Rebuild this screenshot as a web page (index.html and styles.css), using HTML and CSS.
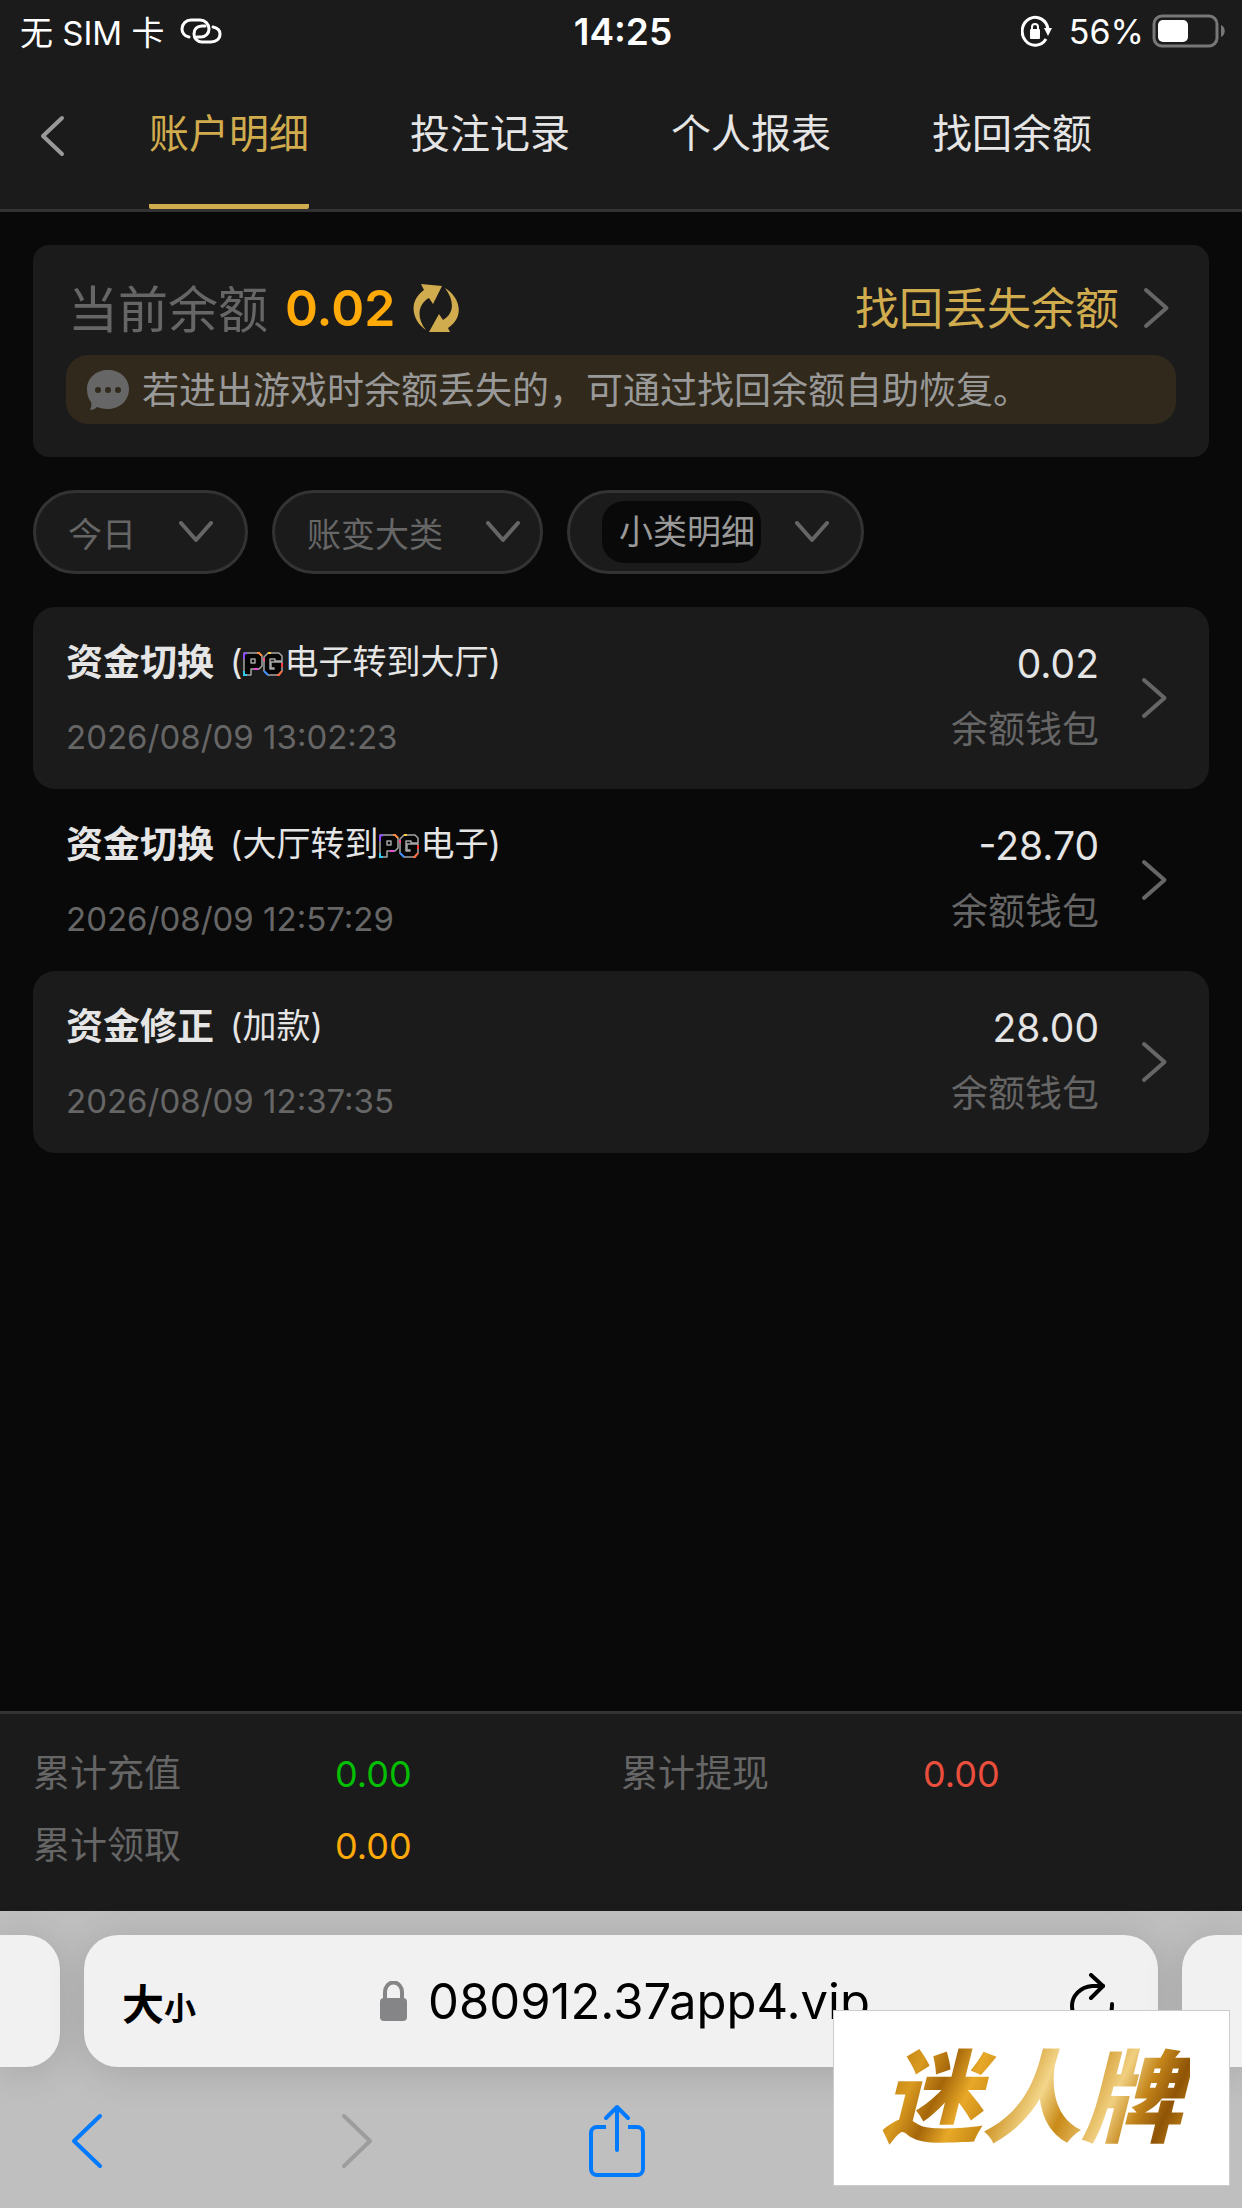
FILE: index.html
```html
<!DOCTYPE html>
<html lang="zh-CN">
<head>
  <meta charset="UTF-8">
  <meta name="viewport" content="width=device-width, initial-scale=1.0">
  <title>账户明细</title>
  <link rel="stylesheet" href="styles.css">
</head>
<body>

<svg class="sprite" aria-hidden="true">
  <symbol id="i-right" viewBox="0 0 27 42">
    <path d="M3 3l20.500 18L3 39" fill="none" stroke="currentColor" stroke-width="4" stroke-linecap="round" stroke-linejoin="round"/>
  </symbol>
  <symbol id="i-left" viewBox="0 0 27 42">
    <path d="M23 3L4 21l19 18" fill="none" stroke="currentColor" stroke-width="4" stroke-linecap="round" stroke-linejoin="round"/>
  </symbol>
  <symbol id="i-down" viewBox="0 0 34 22">
    <path d="M2 2l15 17L32 2" fill="none" stroke="currentColor" stroke-width="4" stroke-linecap="round" stroke-linejoin="round"/>
  </symbol>
  <symbol id="i-pg" viewBox="0 0 42 24">
    <g fill="#050505" stroke="#a5a5a5" stroke-width="1.500" stroke-linejoin="round">
      <path d="M2 1h15l3 3v10l-3 3H9v6H2z"/>
      <path d="M9 7h4v4H9z"/>
      <path d="M26 1h11l3 3v5h-7V7h-5v10h4v-1h-3v-6h11v9l-4 4H26l-4-4V5z"/>
    </g>
    <g fill="none" stroke-width="2">
      <path d="M2 7V2l3-1" stroke="#8a4bff"/>
      <path d="M15 1h2l3 3" stroke="#ff8a3c"/>
      <path d="M2 19v4h3" stroke="#33c8e8"/>
      <path d="M12 17h4" stroke="#f04be0"/>
      <path d="M22 9V6" stroke="#ff4f8a"/>
      <path d="M26 1h3" stroke="#ffc83c"/>
      <path d="M22 19l4 4" stroke="#3c8aff"/>
      <path d="M40 11v4" stroke="#ff3c3c"/>
      <path d="M35 23h2l3-4" stroke="#ff6a3c"/>
    </g>
  </symbol>
</svg>

<div class="page">

  <!-- 状态栏 -->
  <div class="status">
    <div class="status-left">
      <span>无 SIM 卡</span>
      <svg width="42" height="26" viewBox="0 0 42 26" fill="none" stroke="#fff" stroke-width="3" stroke-linecap="round">
        <path d="M9 19C4 18 2 14 2 11c0-5 4-9 9-9h9c5 0 9 4 9 9 0 4-3 8-8 8h-4"/>
        <path d="M33 9c5 1 7 4 7 7 0 5-4 8-9 8h-9c-5 0-8-4-8-8 0-5 3-8 8-8h3"/>
      </svg>
    </div>
    <div class="clock">14:25</div>
    <div class="status-right">
      <svg width="32" height="34" viewBox="0 0 32 34" fill="none" stroke="#fff" stroke-width="3">
        <path d="M25 25A13 14 0 1 1 27 15" />
        <path d="M23 14h8l-4 8z" fill="#fff" stroke="none"/>
        <rect x="9" y="15" width="10" height="10" rx="1" fill="#fff" stroke="none"/>
        <path d="M11 16v-3a3 3 0 0 1 6 0v3" stroke-width="2"/>
      </svg>
      <span class="percent">56%</span>
      <svg width="74" height="34" viewBox="0 0 74 34">
        <rect x="2" y="2" width="63" height="30" rx="8" fill="none" stroke="#777" stroke-width="3"/>
        <rect x="6" y="6" width="30" height="22" rx="5" fill="#fff"/>
        <path d="M69 11c5 2 5 10 0 12z" fill="#777"/>
      </svg>
    </div>
  </div>

  <!-- 顶部导航 -->
  <header class="nav">
    <button class="back" aria-label="返回"><svg width="27" height="42"><use href="#i-left"/></svg></button>
    <nav class="tabs">
      <a class="tab active" href="#detail">账户明细</a>
      <a class="tab" href="#bets">投注记录</a>
      <a class="tab" href="#report">个人报表</a>
      <a class="tab" href="#recover">找回余额</a>
    </nav>
  </header>

  <main class="content">
    <!-- 余额 -->
    <section class="balance">
      <div class="balance-row">
        <span class="balance-label">当前余额</span>
        <span class="balance-value">0.02</span>
        <button class="refresh" aria-label="刷新">
          <svg width="48" height="48" viewBox="0 0 48 48" fill="#d1ac4e">
            <path d="M9 0l21 2-9 18-4-6C6 20 4 34 14 46 1 38-5 18 12 6z"/>
            <path d="M38 48l-21 0 10-18 4 6c12-7 11-20 2-32 14 8 21 28 3 40z"/>
          </svg>
        </button>
        <a class="recover" href="#recover"><span>找回丢失余额</span> <svg width="27" height="42"><use href="#i-right"/></svg></a>
      </div>
      <div class="notice">
        <svg width="44" height="40" viewBox="0 0 44 40">
          <path d="M22 0c12 0 21 8 21 19s-9 20-21 20c-4 0-8-1-11-2-2 2-4 3-7 3 1-2 2-5 1-8C2 28 1 24 1 19 1 8 10 0 22 0z" fill="#666"/>
          <g fill="#31291b"><circle cx="12" cy="20" r="3"/><circle cx="22" cy="20" r="3"/><circle cx="32" cy="20" r="3"/></g>
        </svg>
        <span>若进出游戏时余额丢失的，可通过找回余额自助恢复。</span>
      </div>
    </section>

    <!-- 筛选 -->
    <div class="filters">
      <button class="filter">今日 <svg width="34" height="22"><use href="#i-down"/></svg></button>
      <button class="filter filter-type">账变大类 <svg width="34" height="22"><use href="#i-down"/></svg></button>
      <button class="filter filter-sub"><span class="sub">小类明细</span> <svg width="34" height="22"><use href="#i-down"/></svg></button>
    </div>

    <!-- 明细列表 -->
    <ul class="list">
      <li><a class="record" href="#r1">
        <div class="info">
          <div class="title"><strong>资金切换</strong><span>(<svg class="pg" width="42" height="24"><use href="#i-pg"/></svg>电子转到大厅)</span></div>
          <time>2026/08/09 13:02:23</time>
        </div>
        <div class="money">
          <div class="amount">0.02</div>
          <div class="wallet">余额钱包</div>
        </div>
        <svg width="27" height="42"><use href="#i-right"/></svg>
      </a></li>
      <li><a class="record" href="#r2">
        <div class="info">
          <div class="title"><strong>资金切换</strong><span>(大厅转到<svg class="pg" width="42" height="24"><use href="#i-pg"/></svg>电子)</span></div>
          <time>2026/08/09 12:57:29</time>
        </div>
        <div class="money">
          <div class="amount">-28.70</div>
          <div class="wallet">余额钱包</div>
        </div>
        <svg width="27" height="42"><use href="#i-right"/></svg>
      </a></li>
      <li><a class="record" href="#r3">
        <div class="info">
          <div class="title"><strong>资金修正</strong><span>(加款)</span></div>
          <time>2026/08/09 12:37:35</time>
        </div>
        <div class="money">
          <div class="amount">28.00</div>
          <div class="wallet">余额钱包</div>
        </div>
        <svg width="27" height="42"><use href="#i-right"/></svg>
      </a></li>
    </ul>
  </main>

  <!-- 累计 -->
  <footer class="totals">
    <div class="total"><span>累计充值</span><b class="green">0.00</b></div>
    <div class="total"><span>累计提现</span><b class="red">0.00</b></div>
    <div class="total"><span>累计领取</span><b class="orange">0.00</b></div>
  </footer>

  <!-- 浏览器工具栏 -->
  <div class="browser">
    <div class="address-row">
      <div class="side-tab side-left"></div>
      <div class="address">
        <button class="size" aria-label="大小">大<small>小</small></button>
        <div class="url">
          <svg width="28" height="40" viewBox="0 0 28 40">
            <rect x="0" y="17" width="27" height="23" rx="4" fill="#858587"/>
            <path d="M5 18V11a8 9 0 0 1 17 0v7" fill="none" stroke="#858587" stroke-width="4"/>
          </svg>
          <span>080912.37app4.vip</span>
        </div>
        <button class="reload" aria-label="重新载入">
          <svg width="46" height="56" viewBox="0 0 46 56" fill="none" stroke="#000" stroke-width="4" stroke-linecap="round" stroke-linejoin="round">
            <path d="M33 13H22C10 14 2 23 2 33a20 20 0 0 0 40 0v-2"/>
            <path d="M21 2l12 11-12 12"/>
          </svg>
        </button>
      </div>
      <div class="side-tab side-right"></div>
    </div>
    <div class="toolbar">
      <button class="go-back" aria-label="后退"><svg width="33" height="56" viewBox="0 0 33 56" fill="none" stroke="#007aff" stroke-width="4" stroke-linecap="round" stroke-linejoin="round"><path d="M30 3L4 28l26 25"/></svg></button>
      <button aria-label="前进" disabled><svg width="33" height="56" viewBox="0 0 33 56" fill="none" stroke="#9d9d9d" stroke-width="4" stroke-linecap="round" stroke-linejoin="round"><path d="M3 3l26 25L3 53"/></svg></button>
      <button aria-label="分享"><svg width="58" height="74" viewBox="0 0 58 74" fill="none" stroke="#007aff" stroke-width="4" stroke-linecap="round" stroke-linejoin="round"><path d="M18 23H9a6 6 0 0 0-6 6v36a6 6 0 0 0 6 6h40a6 6 0 0 0 6-6V29a6 6 0 0 0-6-6h-9" stroke-linecap="butt"/><path d="M29 46V3M18 14L29 3l11 11"/></svg></button>
    </div>
  </div>

  <div class="badge"><span>迷人牌</span></div>
</div>

</body>
</html>
```
FILE: styles.css
```css
* {
  margin: 0;
  padding: 0;
  box-sizing: border-box;
}

body {
  font-family: Inter, "Noto Sans CJK SC", sans-serif;
  background: #090909;
  color: #e5e5e5;
}

a {
  color: inherit;
  text-decoration: none;
}

button {
  font: inherit;
  color: inherit;
  background: none;
  border: none;
  cursor: pointer;
}

svg {
  display: block;
  flex-shrink: 0;
}

.sprite {
  position: absolute;
  width: 0;
  height: 0;
}

.page {
  position: relative;
  display: flex;
  flex-direction: column;
  min-height: 100vh;
  overflow: hidden;
}

/* 状态栏 */
.status {
  display: grid;
  grid-template-columns: 1fr auto 1fr;
  align-items: center;
  height: 62px;
  padding: 0 16px 0 20px;
  background: #1b1b1b;
  color: #fff;
  font-size: 34px;
}

.status-left,
.status-right {
  display: flex;
  align-items: center;
  gap: 16px;
}

.status-left {
  font-size: 33px;
}

.status-right {
  justify-content: flex-end;
}

.percent {
  margin-right: -8px;
}

.clock {
  font-size: 37px;
  font-weight: 600;
}

/* 导航 */
.nav {
  display: flex;
  align-items: stretch;
  height: 150px;
  background: #1b1b1b;
  border-bottom: 3px solid #333;
}

.back {
  width: 149px;
  padding-left: 39px;
  color: #999;
}

.tabs {
  display: flex;
  flex: 1;
  gap: 101px;
}

.tab {
  border-bottom: 5px solid transparent;
  border-radius: 2px;
  font-size: 40px;
  line-height: 144px;
}

.tab.active {
  color: #d1ac4e;
  border-color: #d1ac4e;
}

.content {
  flex: 1;
  padding: 33px;
}

/* 余额 */
.balance {
  padding: 33px;
  border-radius: 16px;
  background: #1b1b1b;
}

.balance-row {
  display: flex;
  align-items: center;
  height: 60px;
  margin-bottom: 17px;
  padding: 0 6px 0 2px;
}

.balance-label {
  padding-bottom: 5px;
  color: #666;
  font-size: 50px;
}

.balance-value {
  margin: 0 17px;
  color: #ffaa09;
  font-size: 50px;
  font-weight: 600;
}

.recover {
  display: flex;
  align-items: center;
  gap: 24px;
  margin-left: auto;
  color: #d1ac4e;
  font-size: 44px;
}

.recover span {
  padding-bottom: 5px;
}

.recover svg,
.record > svg {
  color: #666;
}

.notice {
  display: flex;
  align-items: center;
  gap: 12px;
  height: 69px;
  padding: 0 20px;
  border-radius: 22px;
  background: #31291b;
  color: #999;
  font-size: 37px;
}

.notice span {
  padding-bottom: 3px;
}

/* 筛选 */
.filters {
  display: flex;
  gap: 24px;
  margin: 33px 0;
}

.filter {
  display: flex;
  align-items: center;
  justify-content: space-between;
  gap: 43px;
  height: 84px;
  padding: 0 32px;
  border: 3px solid #333;
  border-radius: 42px;
  background: #1b1b1b;
  color: #666;
  font-size: 34px;
}

.filter-type {
  padding-right: 20px;
}

.filter-sub {
  gap: 34px;
}

.sub {
  padding: 0 6px 0 17px;
  border-radius: 22px;
  background: #090909;
  color: #999;
  line-height: 62px;
}

/* 列表 */
.list {
  list-style: none;
}

.record {
  display: flex;
  align-items: center;
  height: 182px;
  padding: 0 41px 0 33px;
  border-radius: 22px;
}

.list li:nth-child(odd) .record {
  background: #1b1b1b;
}

.info {
  flex: 1;
}

.title {
  display: flex;
  align-items: center;
  gap: 16px;
  height: 50px;
  margin-bottom: 27px;
  font-size: 34px;
}

.title strong {
  font-size: 37px;
}

.pg {
  display: inline-block;
  vertical-align: -2px;
}

time {
  display: block;
  color: #666;
  font-size: 33px;
  line-height: 50px;
}

.money {
  margin-right: 42px;
  padding-bottom: 2px;
  text-align: right;
}

.amount {
  font-size: 39px;
  line-height: 66px;
}

.wallet {
  color: #666;
  font-size: 37px;
  line-height: 66px;
}

/* 累计 */
.totals {
  display: grid;
  grid-template-columns: 1fr 1fr;
  padding: 24px 33px 29px;
  border-top: 3px solid #333;
  background: #1b1b1b;
  color: #666;
  font-size: 37px;
  line-height: 72px;
}

.total {
  display: grid;
  grid-template-columns: 302px 1fr;
}

.total b {
  font-size: 36px;
  font-weight: 400;
}

.green {
  color: #04be02;
}

.red {
  color: #ea4e3d;
}

.orange {
  color: #ffaa09;
}

/* 浏览器 */
.browser {
  height: 297px;
  padding-top: 24px;
  background: #bfbfbf;
}

.address-row {
  display: flex;
  gap: 24px;
}

.side-tab,
.address {
  height: 132px;
  background: #f1f1f1;
  box-shadow: 0 4px 40px rgba(0, 0, 0, 0.14);
}

.side-tab {
  width: 60px;
}

.side-left {
  border-radius: 0 34px 34px 0;
}

.side-right {
  border-radius: 34px 0 0 34px;
}

.address {
  display: flex;
  flex: 1;
  align-items: center;
  justify-content: space-between;
  padding: 0 42px 0 38px;
  border-radius: 34px;
  color: #000;
}

.size {
  font-size: 42px;
  font-weight: 700;
}

.size small {
  font-size: 32px;
}

.url {
  display: flex;
  align-items: center;
  gap: 20px;
  margin-right: 16px;
  font-size: 49px;
}

.toolbar {
  display: flex;
  align-items: center;
  gap: 214px;
  padding: 37px 70px 0;
}

.go-back {
  padding-right: 24px;
}

.badge {
  position: absolute;
  right: 12px;
  bottom: 22px;
  width: 397px;
  border: 1px solid #ccc;
  background: #fff;
  font-size: 100px;
  font-style: italic;
  font-weight: 900;
  line-height: 174px;
  text-align: center;
}

.badge span {
  padding: 0 8px;
  background: linear-gradient(115deg, #b8780e 5%, #d99a20 16%, #a5660a 24%, #e8a928 32%, #c98a17 40%, #f3d68a 52%, #c98a17 60%, #f0cf80 72%, #c4851a 80%, #8f5406 88%, #d99a20);
  -webkit-background-clip: text;
  background-clip: text;
  color: transparent;
}
```
